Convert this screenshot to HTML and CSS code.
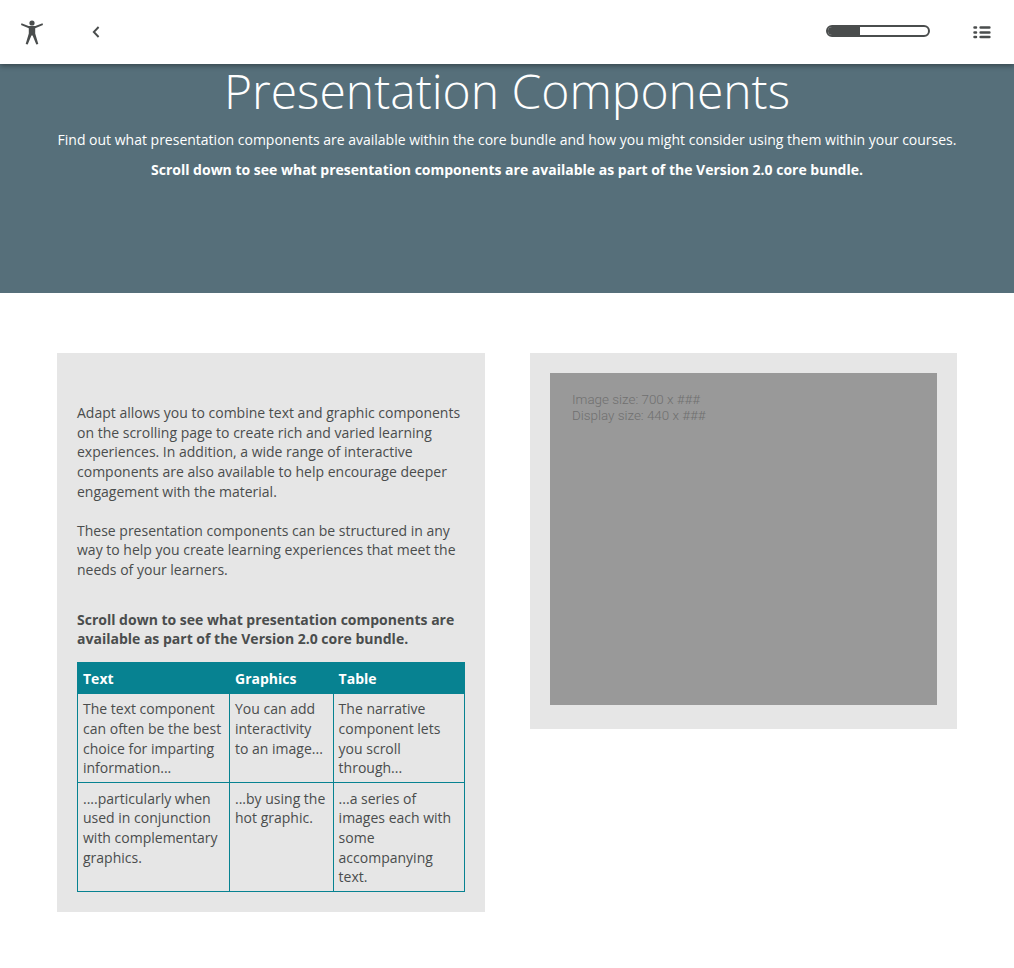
FILE: index.html
```
<!DOCTYPE html>
<html lang="en">
<head>
<meta charset="utf-8">
<title>Presentation Components</title>
<link rel="stylesheet" href="styles.css">
</head>
<body>
<nav class="nav">
  <svg class="nav-person" viewBox="0 0 24 28" width="24" height="28"><circle cx="12" cy="5" r="2.6"/><path d="M1.5 5.2 8.6 8.1H15.4L22.5 5.2 23 6.9 15.2 10.3V15.6L18.3 26 16.3 26.6 12.6 17.6H11.4L7.7 26.6 5.7 26 8.8 15.6V10.3L1 6.9Z"/></svg>
  <svg class="nav-back" viewBox="0 0 8 12" width="8" height="12"><path d="M6.6 1 1.8 6l4.8 5"/></svg>
  <div class="progress"><div class="progress-bar"></div></div>
  <svg class="nav-menu" viewBox="0 0 18 14" width="18" height="14"><path d="M1.5 2.5H3M7.6 2.5H16.4M1.5 7.4H3M7.6 7.4H16.4M1.5 12.1H3M7.6 12.1H16.4"/></svg>
</nav>
<header class="hero">
  <h1 class="hero-title">Presentation Components</h1>
  <p class="hero-text">Find out what presentation components are available within the core bundle and how you might consider using them within your courses.</p>
  <p class="hero-text hero-strong">Scroll down to see what presentation components are available as part of the Version 2.0 core bundle.</p>
</header>
<main class="content">
  <section class="card card-text">
    <p class="para">Adapt allows you to combine text and graphic components on the scrolling page to create rich and varied learning experiences. In addition, a wide range of interactive components are also available to help encourage deeper engagement with the material.</p>
    <p class="para">These presentation components can be structured in any way to help you create learning experiences that meet the needs of your learners.</p>
    <p class="instruction">Scroll down to see what presentation components are available as part of the Version 2.0 core bundle.</p>
    <table class="table">
      <colgroup><col class="col-a"><col class="col-b"><col class="col-c"></colgroup>
      <thead><tr><th>Text</th><th>Graphics</th><th>Table</th></tr></thead>
      <tbody>
        <tr><td>The text component can often be the best choice for imparting information...</td><td>You can add interactivity to an image...</td><td>The narrative component lets you scroll through...</td></tr>
        <tr><td>....particularly when used in conjunction with complementary graphics.</td><td>...by using the hot graphic.</td><td>...a series of images each with some accompanying text.</td></tr>
      </tbody>
    </table>
  </section>
  <section class="card card-image">
    <div class="placeholder">Image size: 700 x ###<br>Display size: 440 x ###</div>
  </section>
</main>
</body>
</html>
```
FILE: styles.css
```
* { box-sizing: border-box; }
body {
  margin: 0;
  background: #fff;
  color: #4a4d4d;
  font: 14px/19.6px "Open Sans", sans-serif;
}
h1, p { margin: 0; }
.nav {
  position: relative;
  display: flex;
  align-items: center;
  height: 64px;
  padding: 0 23px 0 20px;
  background: #fff;
  box-shadow: 0 2px 5px rgba(0, 0, 0, .35);
}
.nav-person { fill: #4a4d4d; }
.nav-back {
  margin-left: 48px;
  fill: none;
  stroke: #4a4d4d;
  stroke-width: 1.9;
}
.nav-menu {
  margin-left: 43px;
  fill: none;
  stroke: #4a4d4d;
  stroke-width: 2.5;
  stroke-linecap: round;
}
.progress {
  width: 104px;
  height: 12px;
  margin: 0 0 2px auto;
  border: 2px solid #4a4d4d;
  border-radius: 6px;
}
.progress-bar {
  width: 32px;
  height: 8px;
  background: #4a4d4d;
  border-radius: 4px 0 0 4px;
}
.hero {
  height: 229px;
  padding: 0 57px;
  background: #566f7a;
  color: #fff;
  text-align: center;
}
.hero-title {
  margin-bottom: 12px;
  font-size: 48px;
  font-weight: 300;
  line-height: 54px;
}
.hero-text { white-space: nowrap; }
.hero-strong { margin-top: 10px; font-weight: 700; }
.content {
  display: grid;
  grid-template-columns: 428px 427px;
  gap: 45px;
  align-items: start;
  padding: 60px 57px 56px;
}
.card { padding: 20px; background: #e6e6e6; }
.card-text { height: 559px; padding-top: 50.3px; }
.para { margin-bottom: 19.6px; }
.instruction { margin: 30px 0 12.8px; font-weight: 700; }
.table {
  width: 387.5px;
  table-layout: fixed;
  border-collapse: collapse;
}
.col-a { width: 152px; }
.col-b { width: 103.6px; }
.col-c { width: 131px; }
th, td {
  padding: 5.4px 5px 4.6px;
  border: 1px solid #078291;
  text-align: left;
  vertical-align: top;
}
th { padding: 6.4px 5px 4.4px; background: #078291; color: #fff; font-weight: 700; }
.card-image { height: 376px; }
.placeholder {
  height: 332px;
  padding: 19px 22px;
  background: #999;
  color: #707070;
  font: 300 13.4px/16px Roboto, sans-serif;
}
```
